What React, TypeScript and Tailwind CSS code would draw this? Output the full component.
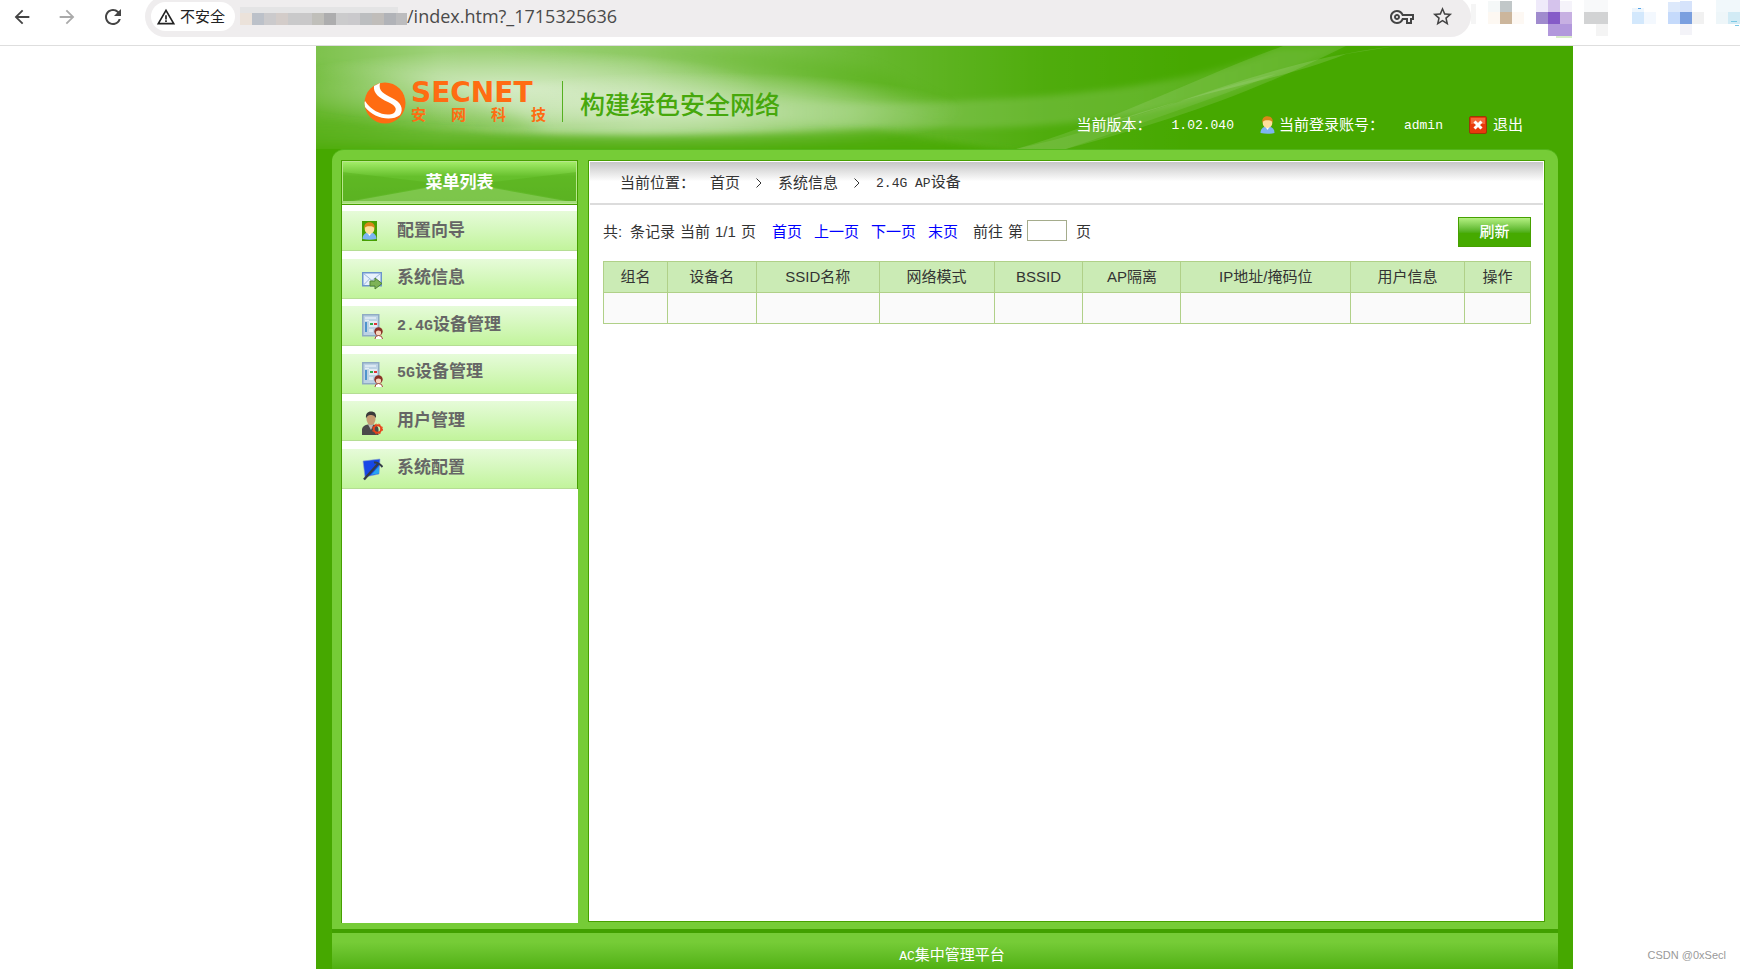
import type { ReactNode } from "react";
import { MdArrowBack, MdArrowForward, MdOutlineVpnKey, MdRefresh, MdStarBorder, MdWarningAmber } from "react-icons/md";

const menuItems: { label: ReactNode; icon: ReactNode }[] = [
  { label: "配置向导", icon: <PersonIcon boxed /> },
  { label: "系统信息", icon: <MailIcon /> },
  { label: <><Mono large>2.4G</Mono>设备管理</>, icon: <DeviceIcon /> },
  { label: <><Mono large>5G</Mono>设备管理</>, icon: <DeviceIcon /> },
  { label: "用户管理", icon: <UserGearIcon /> },
  { label: "系统配置", icon: <ToolsIcon /> },
];

const columns = [
  { title: "组名", width: 64 },
  { title: "设备名", width: 89 },
  { title: "SSID名称", width: 123 },
  { title: "网络模式", width: 115 },
  { title: "BSSID", width: 89 },
  { title: "AP隔离", width: 98 },
  { title: "IP地址/掩码位", width: 170 },
  { title: "用户信息", width: 114 },
  { title: "操作", width: 66 },
];

export default function App() {
  return (
    <div className="relative flex min-h-screen flex-col bg-white font-['Liberation_Sans','Noto_Sans_CJK_SC',sans-serif] text-[15px] leading-5 text-[#333]">
      <BrowserBar />
      <div className="mr-[167px] ml-[316px] flex flex-1 flex-col bg-[#46a800]">
        <Header />
        <main className="mr-[15px] ml-4 flex flex-1 gap-[10px] rounded-t-xl border-t border-[#53b41a] bg-[#76cc37] pt-[10px] pr-[13px] pb-[6px] pl-[9px]">
          <Sidebar />
          <Content />
        </main>
        <footer className="mr-[15px] ml-4 border-t-4 border-[#41a000] bg-linear-to-b from-[#76cc37] from-25% to-[#50b010] pt-3 pb-[2px] pl-[14px] text-center text-white">
          <Mono>AC</Mono>集中管理平台
        </footer>
      </div>
      <span className="absolute right-[14px] bottom-1 text-[11px] text-[#999]">CSDN @0xSecl</span>
    </div>
  );
}

/** Latin text inside the fixed-width Chinese labels. */
function Mono({ children, large = false }: { children: ReactNode; large?: boolean }) {
  return (
    <span className={`font-['Liberation_Mono',monospace] ${large ? "text-[15px]" : "text-[13px]"}`}>{children}</span>
  );
}

const urlCells = [
  "#ebe2da", "#bcc1c9", "#cbcacc", "#d3ccc9", "#c9c9ca", "#c9c8c9", "#c0bfba",
  "#adadae", "#cbcbcc", "#cac9cc", "#bcbec0", "#c0bdba", "#b1b3b8", "#bcbcbe",
];

const extensionCells: [number, number, number, number, string][] = [
  [4, 4, 12, 20, "#f5f5f5"],
  [28, 1, 12, 11, "#f5f8f8"],
  [40, 1, 12, 11, "#c1c7c8"],
  [28, 12, 12, 12, "#fdf8f2"],
  [40, 12, 12, 12, "#ccb69c"],
  [52, 12, 12, 12, "#fdf8f3"],
  [76, 0, 12, 12, "#efeafa"],
  [88, 0, 12, 12, "#d5c3ec"],
  [100, 1, 12, 11, "#f5f3fa"],
  [76, 12, 12, 12, "#a08bce"],
  [88, 12, 12, 12, "#855bc8"],
  [100, 12, 12, 12, "#c7b0e2"],
  [88, 24, 24, 12, "#b298dc"],
  [96, 36, 16, 2, "#d8ecc8"],
  [124, 0, 24, 12, "#f8f9fa"],
  [124, 12, 24, 12, "#d2d3d4"],
  [136, 24, 12, 12, "#f4f4f4"],
  [172, 8, 12, 4, "#eef6fd"],
  [178, 8, 3, 1, "#55a5e8"],
  [172, 12, 12, 12, "#d3e8fc"],
  [184, 12, 12, 12, "#f3f8fe"],
  [208, 2, 12, 10, "#dde9fb"],
  [220, 1, 12, 11, "#d6e3fb"],
  [208, 12, 12, 12, "#c5dafb"],
  [220, 12, 12, 12, "#7a9fdf"],
  [232, 12, 12, 12, "#f1f1f1"],
  [220, 24, 12, 11, "#f3f3f8"],
  [256, 0, 24, 12, "#f1f8fb"],
  [256, 12, 12, 12, "#eef6f9"],
  [268, 12, 12, 12, "#d2ebf5"],
  [271, 21, 6, 1, "#7cc8e4"],
  [275, 25, 4, 1, "#7cc8e4"],
];

function BrowserBar() {
  return (
    <div className="flex h-[46px] items-start overflow-hidden border-b border-[#dedede] bg-white text-[#444]">
      <div className="flex h-[33px] items-center gap-[23px] pl-[11px]">
        <button aria-label="Back"><MdArrowBack size={22} /></button>
        <button aria-label="Forward" className="text-[#aaa]"><MdArrowForward size={22} /></button>
        <button aria-label="Reload"><MdRefresh size={24} /></button>
      </div>
      <div className="-mt-1 ml-5 flex h-[41px] flex-1 items-center rounded-full bg-[#efedee] pr-[17px] pl-[6px]">
        <button className="flex h-[29px] w-[84px] items-center gap-1 rounded-full bg-white pl-[5px] text-[#222]">
          <MdWarningAmber size={20} />
          <span>不安全</span>
        </button>
        <svg width="169" height="20" className="ml-[3px]" aria-hidden="true">
          <rect x="2" width="158" height="6" fill="#e4e4e5" />
          {urlCells.map((fill, i) => (
            <rect key={i} x={2 + i * 12} y="6" width={i === 13 ? 11 : 12} height="12" fill={fill} />
          ))}
        </svg>
        <span className="flex-1 pb-px font-['Open_Sans',sans-serif] text-[18px] text-[#4a4a4a]">/index.htm?_1715325636</span>
        <button aria-label="Passwords" className="mr-[17px]"><MdOutlineVpnKey size={24} /></button>
        <button aria-label="Bookmark"><MdStarBorder size={23} /></button>
      </div>
      <svg width="269" height="40" viewBox="11 0 269 40" shapeRendering="crispEdges" className="shrink-0" aria-hidden="true">
        {extensionCells.map(([x, y, width, height, fill]) => (
          <rect key={`${x}-${y}`} x={x} y={y} width={width} height={height} fill={fill} />
        ))}
      </svg>
    </div>
  );
}

function Header() {
  return (
    <header className="grid">
      <HeaderBackdrop />
      <div className="col-start-1 row-start-1 flex items-start justify-between pr-[50px] pl-12">
        <div className="flex pt-[35px]">
          <svg width="42" height="42" viewBox="0 0 42 42" className="mt-px" aria-hidden="true">
            <circle cx="21" cy="21" r="20.5" fill="#ff6c12" />
            <path
              d="M10 4 C9 11 15 16 24 20 C31 23 34 27 30 31 C23 35 9 31 1 19 C0 21 1 23 1 25 C9 36 27 40 36 33 C40 27 37 20 28 16 C20 12 14 9 16 1 C14 2 12 3 10 4 Z"
              fill="#fff"
            />
          </svg>
          <div className="ml-[5px] w-[135px] text-[#ff6c12]">
            <div className="font-['DejaVu_Sans',sans-serif] text-[28px] leading-6 font-bold">SECNET</div>
            <div className="flex justify-between text-[15px] leading-5 font-bold">
              <span>安</span>
              <span>网</span>
              <span>科</span>
              <span>技</span>
            </div>
          </div>
          <div className="ml-4 h-[41px] w-px bg-[#55b020]" />
          <div className="ml-[17px] pt-2 text-[25px] leading-8 font-medium text-[#46a80c]">构建绿色安全网络</div>
        </div>
        <div className="flex items-center pt-[68px] text-white">
          <span>当前版本：</span>
          <span className="ml-5"><Mono>1.02.040</Mono></span>
          <span className="ml-[26px]"><PersonIcon /></span>
          <span className="ml-1">当前登录账号：</span>
          <span className="ml-5"><Mono>admin</Mono></span>
          <a href="#logout" className="ml-[26px] flex items-center gap-[6px]">
            <svg width="18" height="18" viewBox="0 0 18 18" aria-hidden="true">
              <rect x="0.5" y="0.5" width="17" height="17" rx="1.5" fill="#e83a0c" stroke="#9a3a06" />
              <rect x="2" y="2" width="14" height="6" fill="#f4673a" />
              <path d="M5.5 5.5 L12.5 12.5 M12.5 5.5 L5.5 12.5" stroke="#fff" strokeWidth="3" />
            </svg>
            退出
          </a>
        </div>
      </div>
    </header>
  );
}

function HeaderBackdrop() {
  return (
    <svg
      viewBox="0 0 1257 103"
      preserveAspectRatio="none"
      className="col-start-1 row-start-1 h-[103px] w-full"
      aria-hidden="true"
    >
      <defs>
        <linearGradient id="haze">
          <stop offset="0" stopColor="#fff" stopOpacity="0.3" />
          <stop offset="0.1" stopColor="#fff" stopOpacity="0.48" />
          <stop offset="0.26" stopColor="#fff" stopOpacity="0.44" />
          <stop offset="0.36" stopColor="#fff" stopOpacity="0.3" />
          <stop offset="0.46" stopColor="#fff" stopOpacity="0.16" />
          <stop offset="0.58" stopColor="#fff" stopOpacity="0.05" />
          <stop offset="0.7" stopColor="#fff" stopOpacity="0" />
        </linearGradient>
        <radialGradient id="glow">
          <stop offset="0" stopColor="#fff" stopOpacity="0.55" />
          <stop offset="0.5" stopColor="#fff" stopOpacity="0.3" />
          <stop offset="1" stopColor="#fff" stopOpacity="0" />
        </radialGradient>
        <linearGradient id="arc" gradientUnits="userSpaceOnUse" x1="420" x2="1000" y1="0" y2="0">
          <stop offset="0" stopColor="#fff" stopOpacity="0" />
          <stop offset="0.2" stopColor="#fff" stopOpacity="0.14" />
          <stop offset="0.7" stopColor="#fff" stopOpacity="0.14" />
          <stop offset="1" stopColor="#fff" stopOpacity="0.06" />
        </linearGradient>
        <linearGradient id="floor" x1="0" y1="0" x2="0" y2="1">
          <stop offset="0" stopColor="#46a800" stopOpacity="0" />
          <stop offset="0.8" stopColor="#46a800" stopOpacity="0.95" />
        </linearGradient>
        <filter id="soft" x="-10%" y="-50%" width="120%" height="200%">
          <feGaussianBlur stdDeviation="7" />
        </filter>
        <filter id="softer" x="-10%" y="-50%" width="120%" height="200%">
          <feGaussianBlur stdDeviation="3" />
        </filter>
      </defs>
      <rect width="1257" height="103" fill="#46a800" />
      <rect width="1257" height="103" fill="url(#haze)" />
      <path d="M180 0 C300 4 480 24 640 66 L560 24 C440 0 320 -4 180 0" fill="#46a800" opacity="0.22" filter="url(#soft)" />
      <path d="M-20 24 C110 30 170 52 230 84 L-20 90 Z" fill="#46a800" opacity="0.4" filter="url(#soft)" />
      <ellipse cx="200" cy="42" rx="250" ry="38" fill="url(#glow)" />
      <ellipse cx="380" cy="66" rx="270" ry="40" fill="url(#glow)" />
      <path
        d="M400 40 C480 60 560 60 700 52 C820 44 900 28 960 4 L1030 0 C900 58 800 82 640 82 C540 82 470 78 400 72 Z"
        fill="url(#arc)"
        filter="url(#softer)"
      />
      <path d="M700 103 C790 78 880 32 967 0 L1030 0 C930 50 850 76 750 103 Z" fill="#fff" opacity="0.11" />
      <path d="M770 84 C880 54 960 14 1080 0 L1030 8 C960 36 900 40 770 84" fill="#fff" opacity="0.13" />
      <path d="M700 103 C790 84 900 40 960 28 C900 52 830 76 750 103 Z" fill="#fff" opacity="0.08" />
      <path d="M-40 62 C80 88 260 92 420 88 L560 84 L740 112 L740 120 L-40 120 Z" fill="url(#floor)" filter="url(#softer)" />
    </svg>
  );
}

function Sidebar() {
  return (
    <aside className="w-[237px] border-l border-[#46a000] bg-white">
      <div className="grid border-y border-r border-[#46a000]">
        <svg viewBox="0 0 235 43" preserveAspectRatio="none" className="col-start-1 row-start-1 h-[43px] w-full" aria-hidden="true">
          <defs>
            <linearGradient id="menu-head" x1="0" y1="0" x2="0" y2="1">
              <stop offset="0" stopColor="#a6ef6c" />
              <stop offset="0.36" stopColor="#66c02c" />
              <stop offset="1" stopColor="#5fb527" />
            </linearGradient>
          </defs>
          <rect width="235" height="43" fill="url(#menu-head)" />
          <path d="M0 11 L100 23 L0 41 Z M235 11 L135 23 L235 41 Z" fill="#56ad18" opacity="0.4" />
          <path d="M0 42 L117 21 L235 42 Z" fill="#90cf62" opacity="0.6" />
          <rect x="0.5" y="0.5" width="234" height="42" fill="none" stroke="#b9e78e" />
          <rect y="40" width="235" height="2" fill="#a5dc7c" />
        </svg>
        <h2 className="col-start-1 row-start-1 self-center text-center text-[17px] font-bold text-white">菜单列表</h2>
      </div>
      <nav className="border-r border-[#46a000] pt-[6px]">
        <ul className="flex h-[278px] flex-col justify-between">
          {menuItems.map(({ label, icon }, i) => (
            <li key={i}>
              <a
                href="#menu"
                className="flex h-10 items-center border-b border-[#b5dd94] bg-linear-to-b from-[#e6fbd9] to-[#c2f49c] pl-5 text-[17px] font-bold text-[#666]"
              >
                <span className="flex w-[35px]">{icon}</span>
                <span>{label}</span>
              </a>
            </li>
          ))}
        </ul>
      </nav>
    </aside>
  );
}

function Content() {
  return (
    <section className="mb-px min-w-0 flex-1 border border-[#46a000] bg-white">
      <div className="m-px mb-0 bg-linear-to-b from-[#c6c6c6] to-white to-45%">
        <nav className="flex h-[43px] items-center border-b-2 border-[#dcdcdc] pl-[30px]">
          <span>当前位置：</span>
          <span className="ml-[15px]">首页</span>
          <Chevron />
          <span>系统信息</span>
          <Chevron />
          <span><Mono>2.4G AP</Mono>设备</span>
        </nav>
      </div>
      <div className="pt-3 pr-[13px] pl-[14px]">
        <div className="flex h-[30px] items-center">
          <span className="w-[27px]">共:</span>
          <div className="flex gap-[5px]">
            <span>条记录</span>
            <span>当前</span>
            <span>1/1</span>
            <span>页</span>
          </div>
          <div className="ml-4 flex gap-3 text-[#00f]">
            <a href="#first">首页</a>
            <a href="#prev">上一页</a>
            <a href="#next">下一页</a>
            <a href="#last">末页</a>
          </div>
          <label htmlFor="page" className="ml-[15px] flex gap-[5px]">
            <span>前往</span>
            <span>第</span>
          </label>
          <input id="page" className="mr-[9px] mb-1 ml-1 h-[21px] w-10 border border-[#a5ac8c] bg-white px-1" />
          <span className="flex-1">页</span>
          <button className="h-[30px] w-[73px] border border-[#46a000] bg-linear-to-b from-[#b4f081] to-[#46aa00] to-55% font-medium text-white">
            刷新
          </button>
        </div>
        <table className="mt-[14px] w-full table-fixed border-collapse text-center">
          <colgroup>
            {columns.map(({ title, width }) => (
              <col key={title} style={{ width: `${(width / 928) * 100}%` }} />
            ))}
          </colgroup>
          <thead>
            <tr className="h-[31px] bg-[#cbebb5]">
              {columns.map(({ title }) => (
                <th key={title} className="border border-[#b0d088] font-normal whitespace-nowrap">{title}</th>
              ))}
            </tr>
          </thead>
          <tbody>
            <tr className="h-[31px] bg-[#fafafa]">
              {columns.map(({ title }) => (
                <td key={title} className="border border-[#b0d088]" />
              ))}
            </tr>
          </tbody>
        </table>
      </div>
    </section>
  );
}

function Chevron() {
  return (
    <svg width="6" height="10" viewBox="0 0 6 10" className="mx-4" aria-hidden="true">
      <path d="M0.5 0.5 L5 5 L0.5 9.5" fill="none" stroke="#333" />
    </svg>
  );
}

function PersonIcon({ boxed = false }: { boxed?: boolean }) {
  return (
    <svg width="15" height={boxed ? 20 : 18} viewBox={boxed ? "0 -1 15 20" : "0 0 15 18"} aria-hidden="true">
      {boxed && <rect y="-1" width="15" height="20" fill="#46a000" />}
      <path d="M0.5 17 C0.5 12.5 3.5 10.5 7.5 10.5 C11.5 10.5 14.5 12.5 14.5 17 Q7.5 18.5 0.5 17" fill="#7db4f2" />
      <path d="M5.5 11 L7.5 14 L9.5 11" fill="#fff" />
      <ellipse cx="7.5" cy="7" rx="4.8" ry="5" fill="#fddf9c" />
      <path d="M2.4 7 C1.6 2.5 4 0.2 7.5 0.2 C11 0.2 13.4 2.5 12.6 7 C12 4.5 10 4.2 7.5 4.2 C5 4.2 3 4.5 2.4 7" fill="#d9861a" />
    </svg>
  );
}

function MailIcon() {
  return (
    <svg width="21" height="20" viewBox="0 0 21 20" className="mt-[3px]" aria-hidden="true">
      <rect x="0.75" y="2.75" width="18.5" height="13" fill="#e8f1fc" stroke="#6c94cc" strokeWidth="1.5" />
      <path d="M1.5 3.5 L10 10.5 L18.5 3.5 M1.5 15 L7.5 9 M18.5 15 L12.5 9" fill="none" stroke="#9bb8dd" />
      <path d="M8 11 H13 V8 L20 13.5 L13 19 V16 H8 Z" fill="#7db356" stroke="#4f8434" />
    </svg>
  );
}

function DeviceIcon() {
  return (
    <svg width="21" height="25" viewBox="0 0 21 25" className="mt-[2px]" aria-hidden="true">
      <rect x="0.75" y="0.75" width="16" height="21" fill="#bcd2e4" stroke="#8fabc4" strokeWidth="1.5" />
      <path d="M3 4 H14 M3 6.5 H7" stroke="#e4eef6" strokeWidth="1.5" />
      <rect x="3" y="8" width="2" height="10" fill="#4e94cc" />
      <rect x="7" y="7" width="8" height="6" fill="#e2ecf4" />
      <rect x="8" y="9" width="3" height="2" fill="#2fa84a" />
      <rect x="12" y="9" width="3" height="2" fill="#dd3535" />
      <rect x="7" y="15" width="4" height="3" fill="#dce8f1" />
      <circle cx="16.5" cy="17.5" r="4.2" fill="#8a3226" />
      <ellipse cx="16.5" cy="19" rx="2.6" ry="2.4" fill="#f7d6bd" />
      <path d="M13 25 Q13 21.5 16.5 21.5 Q20.5 21.5 20.5 25" fill="#fff" stroke="#a04738" />
    </svg>
  );
}

function UserGearIcon() {
  return (
    <svg width="21" height="24" viewBox="0 0 21 24" className="mt-[5px]" aria-hidden="true">
      <path d="M0 24 V18 Q1 14 6 13.5 H11 Q16 14 16.5 18 V24 Z" fill="#4a4a4a" />
      <path d="M6 13.5 L9 19 L11.5 13.5" fill="#b8b8b8" />
      <ellipse cx="9" cy="8" rx="4.5" ry="6" fill="#c69b72" />
      <path d="M4 7.5 C3.5 2.5 5.5 0.5 9 0.5 C12.5 0.5 14.5 2.5 14 7 Q12 3.5 9 4 Q5.5 3.5 4 7.5" fill="#3a3a3a" />
      <circle cx="15.5" cy="18" r="3.7" fill="none" stroke="#e8441c" strokeWidth="2" />
      <circle cx="15.5" cy="18" r="5" fill="none" stroke="#e8441c" strokeDasharray="2 2" />
    </svg>
  );
}

function ToolsIcon() {
  return (
    <svg width="21" height="23" viewBox="0 0 21 23" className="mt-[2px]" aria-hidden="true">
      <path d="M1 3 L18 1 L17 16 L3 19 Z" fill="#1748e6" stroke="#8fa6c8" strokeWidth="0.6" />
      <path d="M17 8 L17 15.5 L9 17 Z" fill="#27a4f4" />
      <path d="M2 21.5 L16 6" stroke="#333c48" strokeWidth="2.4" />
      <path d="M12 4.5 C15 4 18 6 20.5 9" fill="none" stroke="#333c48" strokeWidth="2" />
    </svg>
  );
}
